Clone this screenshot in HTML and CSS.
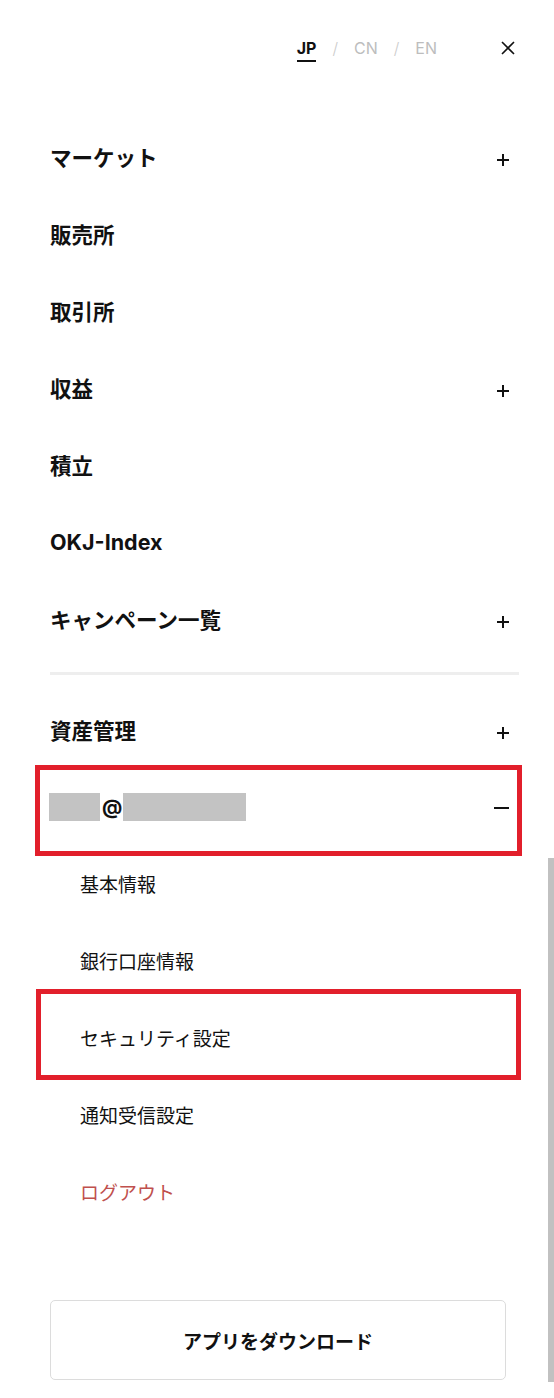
FILE: index.html
```html
<!DOCTYPE html>
<html lang="ja">
  <head>
    <meta charset="UTF-8" />
    <title>Menu</title>
    <meta name="viewport" content="width=device-width, initial-scale=1.0" />
    <link rel="stylesheet" href="styles.css">
  </head>
  <body>
    <div class="header">
      <div class="lang">
        <span class="active">JP</span>
        <span class="sep">/</span>
        <span>CN</span>
        <span class="sep">/</span>
        <span>EN</span>
      </div>
      <svg class="close" width="14" height="14" viewBox="0 0 14 14">
        <path d="M1 1L13 13M13 1L1 13" stroke="#111" stroke-width="1.6" fill="none" />
      </svg>
    </div>

    <div class="menu">
      <div class="row"><span>マーケット</span><span class="plus"></span></div>
      <div class="row"><span>販売所</span></div>
      <div class="row"><span>取引所</span></div>
      <div class="row"><span>収益</span><span class="plus"></span></div>
      <div class="row"><span>積立</span></div>
      <div class="row"><span>OKJ-Index</span></div>
      <div class="row"><span>キャンペーン一覧</span><span class="plus"></span></div>
    </div>

    <div class="divider"></div>

    <div class="menu">
      <div class="row"><span>資産管理</span><span class="plus"></span></div>
      <div class="row marked">
        <span class="email"><span class="mask short"></span>@<span class="mask long"></span></span>
        <span class="minus"></span>
      </div>
      <div class="row sub"><span>基本情報</span></div>
      <div class="row sub"><span>銀行口座情報</span></div>
      <div class="row sub marked-sub"><span>セキュリティ設定</span></div>
      <div class="row sub"><span>通知受信設定</span></div>
      <div class="row sub logout"><span>ログアウト</span></div>
    </div>

    <div class="download">アプリをダウンロード</div>

    <div class="scrollbar"></div>
  </body>
</html>
```

FILE: styles.css
```css
body {
  margin: 0;
  padding: 0;
  background: #fff;
  color: #111;
  font-family: "Inter", "Noto Sans CJK JP", sans-serif;
  position: relative;
  height: 1398px;
  overflow: hidden;
}

.header {
  height: 118px;
  box-sizing: border-box;
  padding: 34px 39px 0 0;
  display: flex;
  align-items: flex-start;
  justify-content: flex-end;
}

.lang {
  display: flex;
  align-items: center;
  gap: 16px;
  font-size: 16px;
  color: #bdbdbd;
  margin-right: 64px;
  height: 28px;
}

.lang .active {
  color: #111;
  font-weight: 700;
  border-bottom: 2px solid #111;
  padding-bottom: 2px;
  margin-top: 4px;
}

.lang .sep {
  color: #ccc;
  font-weight: 300;
}

.close {
  display: block;
  margin-top: 7px;
}

.menu {
  padding: 0 44px 0 50px;
}

.row {
  height: 77px;
  display: flex;
  align-items: center;
  justify-content: space-between;
  font-size: 21.5px;
  font-weight: 700;
  position: relative;
}

.plus {
  width: 12px;
  height: 12px;
  position: relative;
  margin-top: 6px;
  margin-right: 1px;
}

.plus::before,
.plus::after {
  content: "";
  position: absolute;
  background: #111;
}

.plus::before {
  left: 0;
  right: 0;
  top: 5px;
  height: 2px;
}

.plus::after {
  top: 0;
  bottom: 0;
  left: 5px;
  width: 2px;
}

.minus {
  width: 15px;
  height: 2px;
  background: #111;
  margin-right: 1px;
  margin-top: 2px;
}

.divider {
  height: 3px;
  background: #eeeeee;
  margin: 15px 35px 16px 50px;
}

.email {
  display: flex;
  align-items: center;
  font-size: 20px;
}

.mask {
  display: inline-block;
  height: 28px;
  background: #c3c3c3;
}

.mask.short {
  width: 51px;
  margin-left: -1px;
  margin-right: 2px;
}

.mask.long {
  width: 123px;
  margin-left: 1px;
}

.marked::after {
  content: "";
  position: absolute;
  left: -15px;
  right: -12px;
  top: -3px;
  bottom: -11px;
  border: 5px solid #e21f2b;
}

.sub {
  font-size: 19px;
  font-weight: 400;
  padding-left: 30px;
}

.marked-sub::after {
  content: "";
  position: absolute;
  left: -14px;
  right: -11px;
  top: -10px;
  bottom: -4px;
  border: 5px solid #e21f2b;
}

.logout {
  color: #c0504d;
}

.download {
  margin: 70px 48px 0 50px;
  height: 78px;
  border: 1px solid #dcdcdc;
  border-radius: 5px;
  display: flex;
  align-items: center;
  justify-content: center;
  font-size: 19px;
  font-weight: 700;
}

.scrollbar {
  position: absolute;
  right: 0;
  top: 858px;
  width: 6px;
  height: 524px;
  background: #c1c1c1;
}
```
